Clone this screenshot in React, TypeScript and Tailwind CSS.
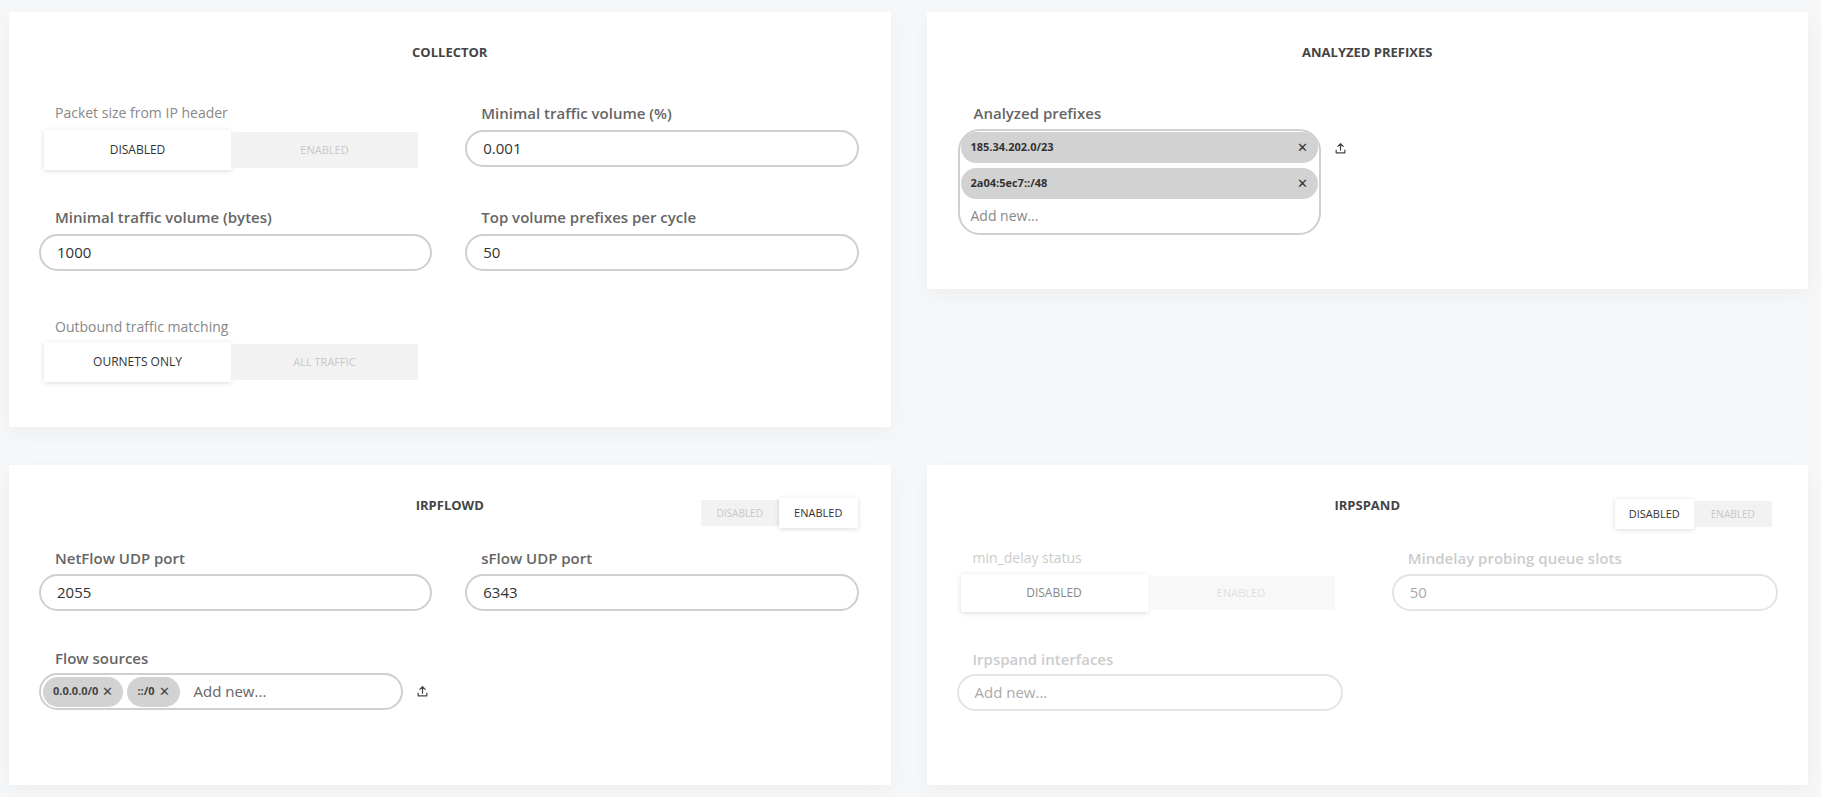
import React from "react";

const font = { fontFamily: '"Open Sans", "Noto Sans", sans-serif' };

function Toggle({ options, active, w, h, small, faded }: { options: string[]; active: number; w: number; h: number; small?: boolean; faded?: boolean }) {
  return (
    <div className="flex items-center" style={{ width: w, height: h }}>
      {options.map((o, i) =>
        i === active ? (
          <div key={o} className={`flex-1 h-full flex items-center justify-center bg-white shadow-[0_1px_5px_rgba(0,0,0,0.15)] ${small ? "text-[11px]" : "text-[12px]"} ${faded ? "text-[#888]" : "text-[#333]"}`}>{o}</div>
        ) : (
          <div key={o} className={`flex-1 flex items-center justify-center bg-[#f2f2f2] ${faded ? "bg-[#f8f8f8] text-[#e0e0e0]" : "text-[#c8c8c8]"} ${small ? "text-[10px]" : "text-[11px]"}`} style={{ height: h - 4 }}>{o}</div>
        )
      )}
    </div>
  );
}

function Label({ children, bold = true, faded }: { children: React.ReactNode; bold?: boolean; faded?: boolean }) {
  return (
    <div className={`${bold ? "font-semibold text-[15px]" : "text-[14px]"} ${faded ? "text-[#ccc]" : bold ? "text-[#666]" : "text-[#888]"} h-[22px] leading-[22px] pl-4`}>{children}</div>
  );
}

function Input({ value, faded }: { value: string; faded?: boolean }) {
  return (
    <div className={`h-[37px] rounded-full border-2 ${faded ? "border-[#e4e4e4] text-[#aaa]" : "border-[#cfcfcf] text-[#333]"} flex items-center px-4 text-[15px]`}>{value}</div>
  );
}

function Upload() {
  return (
    <svg width="13" height="13" viewBox="0 0 24 24" fill="none" stroke="#444" strokeWidth="2.2" strokeLinecap="round" strokeLinejoin="round">
      <path d="M12 15V3M7 8l5-5 5 5" />
      <path d="M4 15v5h16v-5" />
    </svg>
  );
}

function Card({ title, children, right, className = "" }: { title: string; children: React.ReactNode; right?: React.ReactNode; className?: string }) {
  return (
    <div className={`bg-white shadow-[0_6px_20px_rgba(0,0,0,0.04)] ${className}`}>
      <div className="relative h-[60px] flex items-end justify-center pb-[2px]">
        <div className="text-[13px] font-bold text-[#444] mb-[8px]">{title}</div>
        {right}
      </div>
      {children}
    </div>
  );
}

export default function App() {
  return (
    <div style={font} className="w-[1821px] h-[797px] bg-[#f6f7f9] pl-[9px] pr-[13px] pt-[12px]">
      <div className="grid grid-cols-2 gap-x-[36px] gap-y-[38px]">
        <Card title="COLLECTOR" className="h-[415px] pt-[0px]">
          <div className="grid grid-cols-2 gap-x-[33px] pl-[30px] pr-[32px] pt-[30px]">
            <div>
              <Label bold={false}>Packet size from IP header</Label>
              <div className="pl-[5px] mt-[6px]"><Toggle options={["DISABLED", "ENABLED"]} active={0} w={374} h={40} /></div>
            </div>
            <div>
              <Label>Minimal traffic volume (%)</Label>
              <div className="mt-[6px]"><Input value="0.001" /></div>
            </div>
            <div className="mt-[36px]">
              <Label>Minimal traffic volume (bytes)</Label>
              <div className="mt-[6px]"><Input value="1000" /></div>
            </div>
            <div className="mt-[36px]">
              <Label>Top volume prefixes per cycle</Label>
              <div className="mt-[6px]"><Input value="50" /></div>
            </div>
            <div className="mt-[45px]">
              <Label bold={false}>Outbound traffic matching</Label>
              <div className="pl-[5px] mt-[4px]"><Toggle options={["OURNETS ONLY", "ALL TRAFFIC"]} active={0} w={374} h={40} /></div>
            </div>
          </div>
        </Card>

        <Card title="ANALYZED PREFIXES" className="h-[277px] self-start">
          <div className="pl-[31px] pt-[30px]">
            <Label>Analyzed prefixes</Label>
            <div className="flex items-start gap-[13px] mt-[5px]">
              <div className="w-[363px] rounded-[22px] border-2 border-[#cfcfcf] p-[1px] pb-[5px]">
                {["185.34.202.0/23", "2a04:5ec7::/48"].map((c) => (
                  <div key={c} className="h-[31px] mb-[5px] rounded-full bg-[#d2d2d2] flex items-center justify-between px-[10px] text-[11px] font-bold text-[#333]">
                    <span>{c}</span><span className="text-[13px] font-normal">✕</span>
                  </div>
                ))}
                <div className="px-[10px] text-[14px] text-[#888] h-[24px] leading-[24px]">Add new...</div>
              </div>
              <div className="mt-[13px]"><Upload /></div>
            </div>
          </div>
        </Card>

        <Card title="IRPFLOWD" className="h-[320px]" right={<div className="absolute right-[33px] top-[33px]"><Toggle options={["DISABLED", "ENABLED"]} active={1} w={157} h={30} small /></div>}>
          <div className="grid grid-cols-2 gap-x-[33px] pl-[30px] pr-[32px] pt-[22px]">
            <div>
              <Label>NetFlow UDP port</Label>
              <div className="mt-[5px]"><Input value="2055" /></div>
            </div>
            <div>
              <Label>sFlow UDP port</Label>
              <div className="mt-[5px]"><Input value="6343" /></div>
            </div>
            <div className="col-span-2 mt-[36px]">
              <Label>Flow sources</Label>
              <div className="flex items-center gap-[13px] mt-[4px]">
                <div className="w-[364px] h-[37px] rounded-full border-2 border-[#cfcfcf] flex items-center gap-[4px] px-[2px]">
                  {["0.0.0.0/0", "::/0"].map((c) => (
                    <div key={c} className="h-[30px] rounded-full bg-[#d2d2d2] flex items-center gap-[4px] px-[10px] text-[11px] font-bold text-[#444]">
                      {c}<span className="font-normal text-[13px]">✕</span>
                    </div>
                  ))}
                  <span className="ml-[10px] text-[15px] text-[#666]">Add new...</span>
                </div>
                <Upload />
              </div>
            </div>
          </div>
        </Card>

        <Card title="IRPSPAND" className="h-[320px]" right={<div className="absolute right-[36px] top-[34px]"><Toggle options={["DISABLED", "ENABLED"]} active={0} w={157} h={30} small /></div>}>
          <div className="grid grid-cols-2 gap-x-[49px] pl-[30px] pr-[30px] pt-[22px]">
            <div>
              <Label bold={false} faded>min_delay status</Label>
              <div className="pl-[4px] mt-[5px]"><Toggle options={["DISABLED", "ENABLED"]} active={0} w={374} h={38} faded /></div>
            </div>
            <div>
              <Label faded>Mindelay probing queue slots</Label>
              <div className="mt-[5px]"><Input value="50" faded /></div>
            </div>
            <div className="mt-[36px]">
              <Label faded>Irpspand interfaces</Label>
              <div className="mt-[4px]"><Input value="Add new..." faded /></div>
            </div>
          </div>
        </Card>
      </div>
    </div>
  );
}
